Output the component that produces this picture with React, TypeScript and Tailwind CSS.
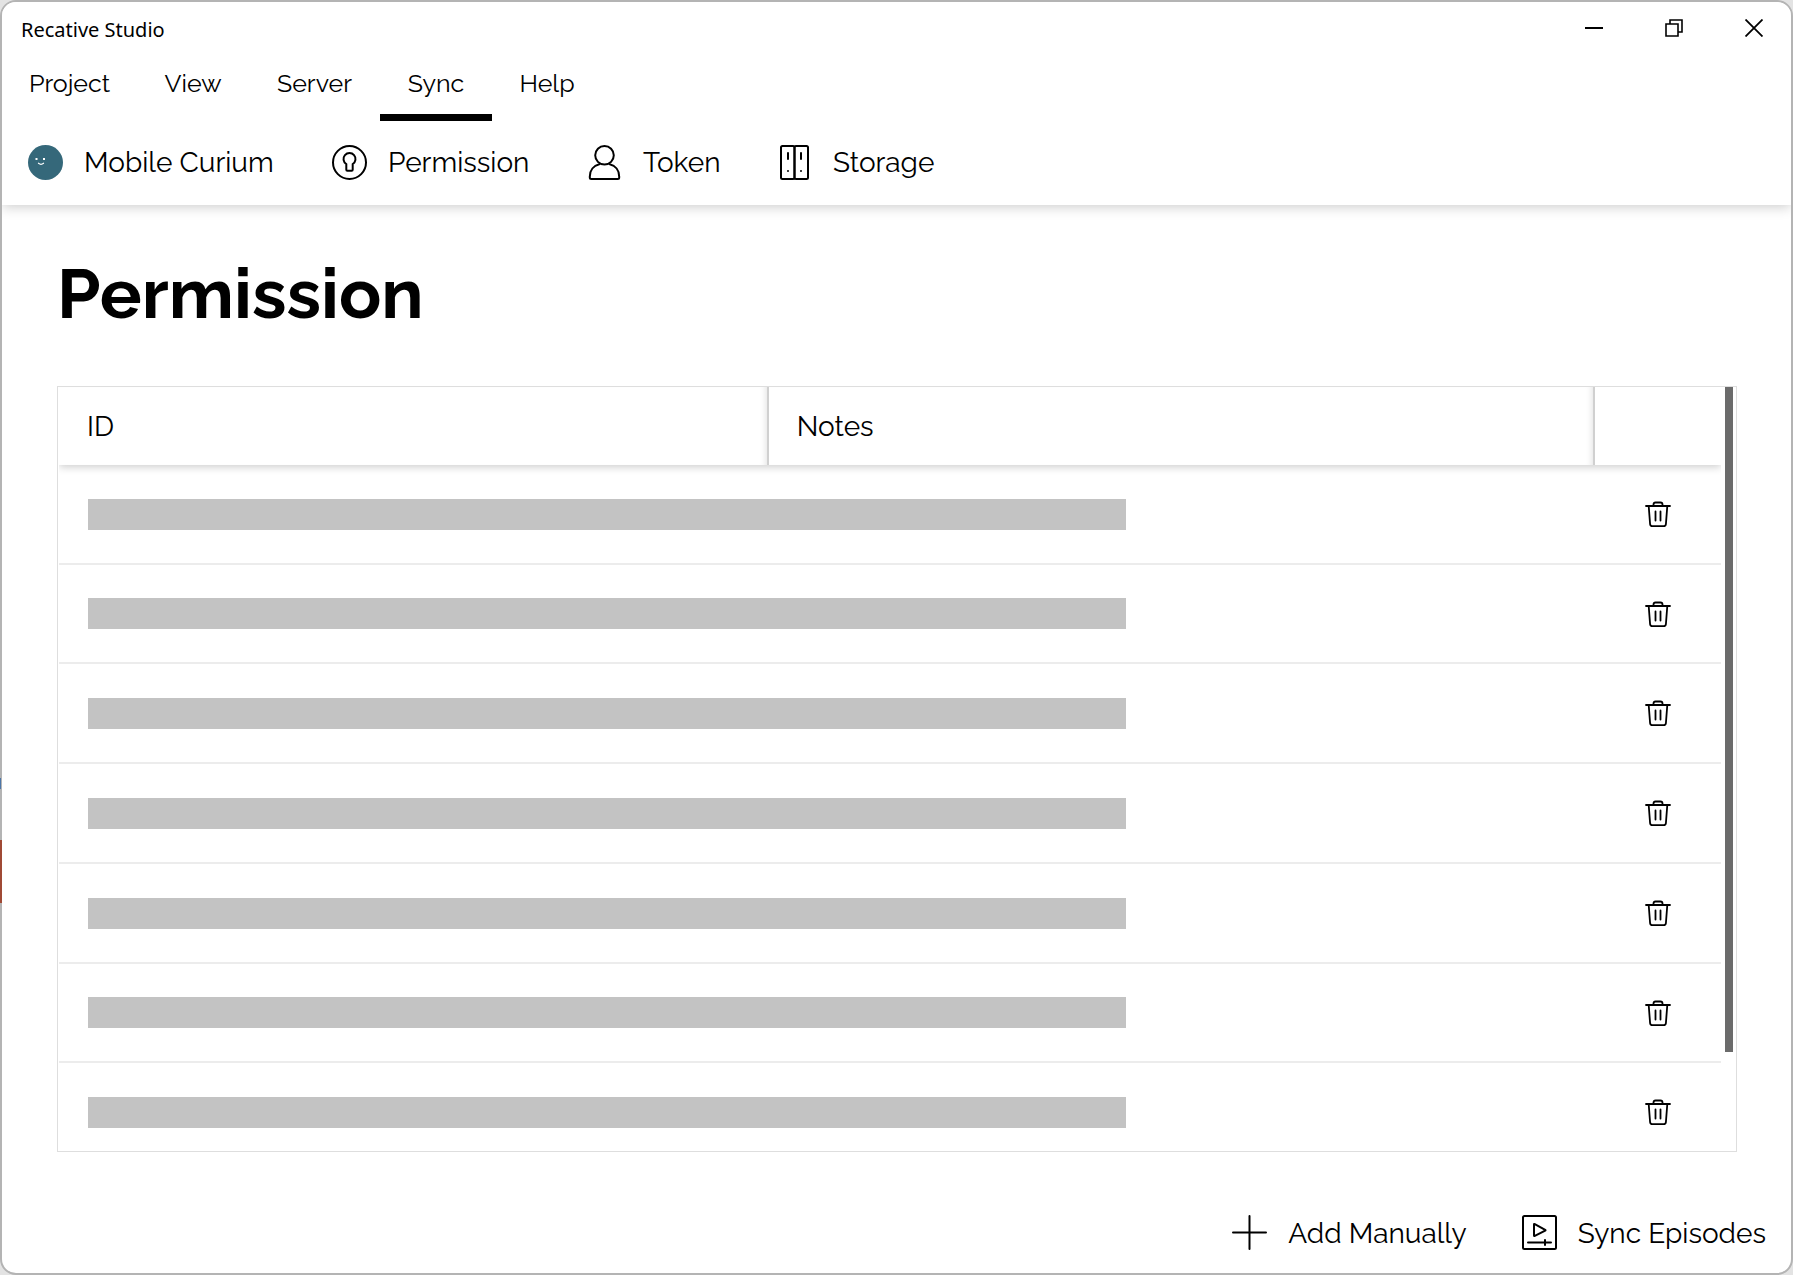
import React from "react";

const sans = "font-['Raleway','Lato',sans-serif]";

function Svg({ children }: { children: React.ReactNode }) {
  return (
    <svg
      viewBox="0 0 35 35"
      className="size-[35px] shrink-0"
      fill="none"
      stroke="currentColor"
      strokeWidth="2"
      strokeLinecap="round"
      strokeLinejoin="round"
      aria-hidden="true"
    >
      {children}
    </svg>
  );
}

const FaceIcon = () => (
  <Svg>
    <circle cx="17.5" cy="17.5" r="17.5" fill="#35687a" stroke="none" />
    <path d="M7.5 13h2v2h-2zM15 13h2v2h-2z" fill="#fff" stroke="none" />
    <path d="M10.5 18.3q2.5 2 5 0" stroke="#fff" strokeWidth="1.3" />
  </Svg>
);
const PermissionIcon = () => (
  <Svg>
    <circle cx="17.5" cy="17.5" r="16.5" />
    <path d="M14.3 24.7v-5.6a6 6 0 1 1 6.4 0v5.6q0 1-1 1h-4.4q-1 0-1-1z" />
  </Svg>
);
const TokenIcon = () => (
  <Svg>
    <circle cx="17.5" cy="10.3" r="9.3" />
    <path d="M12.3 19.3C6.5 20.7 2.8 25.5 2.8 31.5v1q0 1.5 1.5 1.5h26.4q1.5 0 1.5-1.5v-1c0-6-3.7-10.8-9.5-12.2" />
  </Svg>
);
const StorageIcon = () => (
  <Svg>
    <rect x="4" y="1" width="13.5" height="33" rx="1.5" />
    <rect x="17.5" y="1" width="13.5" height="33" rx="1.5" />
    <path d="M11 8v6M24 8v6M11 26v.1M24 26v.1" />
  </Svg>
);
const PlusIcon = () => (
  <Svg>
    <path d="M17.5 1v33M1 17.5h33" />
  </Svg>
);
const EpisodesIcon = () => (
  <Svg>
    <rect x="1" y="1" width="33" height="33" rx="1.5" />
    <path d="M12 9.5v11q0 .8.8.4l10.4-5.3q.7-.4 0-.8L12.8 9.1q-.8-.4-.8.4z" />
    <path d="M6 27.5h23M23 25v5" />
  </Svg>
);
const TrashIcon = () => (
  <svg
    viewBox="0 0 28 28"
    className="size-7"
    fill="none"
    stroke="currentColor"
    strokeWidth="1.8"
    strokeLinecap="round"
    strokeLinejoin="round"
    aria-hidden="true"
  >
    <path d="M2 6h24" />
    <path d="M9.5 6V4.5q0-2 2-2h5q2 0 2 2V6" />
    <path d="M4.7 6l1.4 18.2q.2 2 2.2 2h11.4q2 0 2.2-2L23.3 6" />
    <path d="M11.5 11.5v9M16.5 11.5v9" />
  </svg>
);

const tabs = [
  { label: "Project", width: "w-[135px]" },
  { label: "View", width: "w-[112px]" },
  { label: "Server", width: "w-[131px]" },
  { label: "Sync", width: "w-[112px]", active: true },
  { label: "Help", width: "w-[110px]" },
];

const tools = [
  { label: "Mobile Curium", Icon: FaceIcon, width: "w-[304px]" },
  { label: "Permission", Icon: PermissionIcon, width: "w-[255px]" },
  { label: "Token", Icon: TokenIcon, width: "w-[190px]" },
  { label: "Storage", Icon: StorageIcon, width: "w-[216px]" },
];

const actions = [
  { label: "Add Manually", Icon: PlusIcon },
  { label: "Sync Episodes", Icon: EpisodesIcon },
];

const rows = ["h-[100px]", "h-[99px]", "h-[100px]", "h-[100px]", "h-[100px]", "h-[99px]", "h-[100px]"];

function TitleBar() {
  return (
    <div className="flex h-[52px] items-center justify-between pl-[19px] text-black">
      <span className="pt-1 font-['Noto_Sans',sans-serif] text-[20px] leading-6">Recative Studio</span>
      <div className="flex h-full gap-1.5">
        <button aria-label="Minimize" className="flex h-full w-[74px] items-center justify-center">
          <svg viewBox="0 0 18 18" className="size-[18px]" stroke="currentColor" strokeWidth="2">
            <path d="M0 9h18" />
          </svg>
        </button>
        <button aria-label="Restore" className="flex h-full w-[74px] items-center justify-center">
          <svg viewBox="0 0 18 18" className="size-[18px]" fill="none" stroke="currentColor" strokeWidth="1.6">
            <path d="M1 5h12v12H1zM5 5V1h12v12h-4" />
          </svg>
        </button>
        <button aria-label="Close" className="flex h-full w-[74px] items-center justify-center">
          <svg viewBox="0 0 18 18" className="size-[18px]" stroke="currentColor" strokeWidth="1.8">
            <path d="M.5.5l17 17M17.5.5l-17 17" />
          </svg>
        </button>
      </div>
    </div>
  );
}

export default function App() {
  return (
    <div className="relative h-screen bg-[#e3e3e3]">
      <div className={`flex h-full flex-col overflow-hidden rounded-2xl border-2 border-[#b4b4b4] bg-white text-black ${sans}`}>
        <header className="relative z-10 bg-white shadow-[0_2px_12px_rgba(0,0,0,0.2)]">
          <TitleBar />
          <nav className="flex h-[67px] text-[25px] leading-8">
            {tabs.map((t) => (
              <button
                key={t.label}
                className={`${t.width} border-b-[7px] pb-0.5 ${t.active ? "border-black" : "border-transparent"}`}
              >
                {t.label}
              </button>
            ))}
          </nav>
          <div className="flex h-[84px] pb-0.5 text-[28px] leading-9">
            {tools.map(({ label, Icon, width }) => (
              <button key={label} className={`flex items-center gap-[21px] pl-[26px] whitespace-nowrap ${width}`}>
                <Icon />
                <span className="pt-0.5">{label}</span>
              </button>
            ))}
          </div>
        </header>

        <main className="flex min-h-0 flex-1 flex-col pt-11 pr-[54px] pl-[55px]">
          <h1 className="text-[70px] leading-[88px] font-bold">Permission</h1>
          <div className="mt-[49px] flex min-h-0 flex-1 border border-[#dedede] pl-px">
            <div className="min-w-0 flex-1 overflow-hidden">
              <table className="w-full table-fixed border-separate border-spacing-0">
                <colgroup>
                  <col className="w-[42.7%]" />
                  <col />
                  <col className="w-[126px]" />
                </colgroup>
                <thead className="relative shadow-[0_2px_8px_rgba(0,0,0,0.2)]">
                  <tr className="h-[78px] bg-white text-left text-[28px] leading-9">
                    <th className="border-r-2 border-[#d0d0d0] pt-0.5 pl-7 font-normal shadow-[inset_-6px_0_6px_-5px_rgba(0,0,0,0.12)]">ID</th>
                    <th className="border-r-2 border-[#d0d0d0] pt-0.5 pl-7 font-normal shadow-[inset_-6px_0_6px_-5px_rgba(0,0,0,0.12)]">Notes</th>
                    <th aria-label="Actions" />
                  </tr>
                </thead>
                <tbody>
                  {rows.map((h, i) => (
                    <tr key={i} className={h}>
                      <td colSpan={2} className="border-b-2 border-[#ececec] pl-[29px]">
                        <div className="h-[31px] w-[68.9%] bg-[#c3c3c3]" />
                      </td>
                      <td className="border-b-2 border-[#ececec]">
                        <button aria-label="Delete" className="mx-auto block">
                          <TrashIcon />
                        </button>
                      </td>
                    </tr>
                  ))}
                </tbody>
              </table>
            </div>
            <div className="mr-[3px] ml-1 w-2">
              <div className="h-[87%] bg-[#6b6b6b]" />
            </div>
          </div>
        </main>

        <footer className="mt-[42px] mb-0.5 flex h-[77px] items-center justify-end gap-[55px] pr-[25px] text-[28px] leading-9">
          {actions.map(({ label, Icon }) => (
            <button key={label} className="flex items-center gap-[21px]">
              <Icon />
              <span className="pt-0.5">{label}</span>
            </button>
          ))}
        </footer>
      </div>
      <div className="absolute top-[840px] left-0 h-[63px] w-0.5 bg-[#a04a35]" />
      <div className="absolute top-[778px] left-0 h-[11px] w-px bg-[#4d76a8]" />
    </div>
  );
}
